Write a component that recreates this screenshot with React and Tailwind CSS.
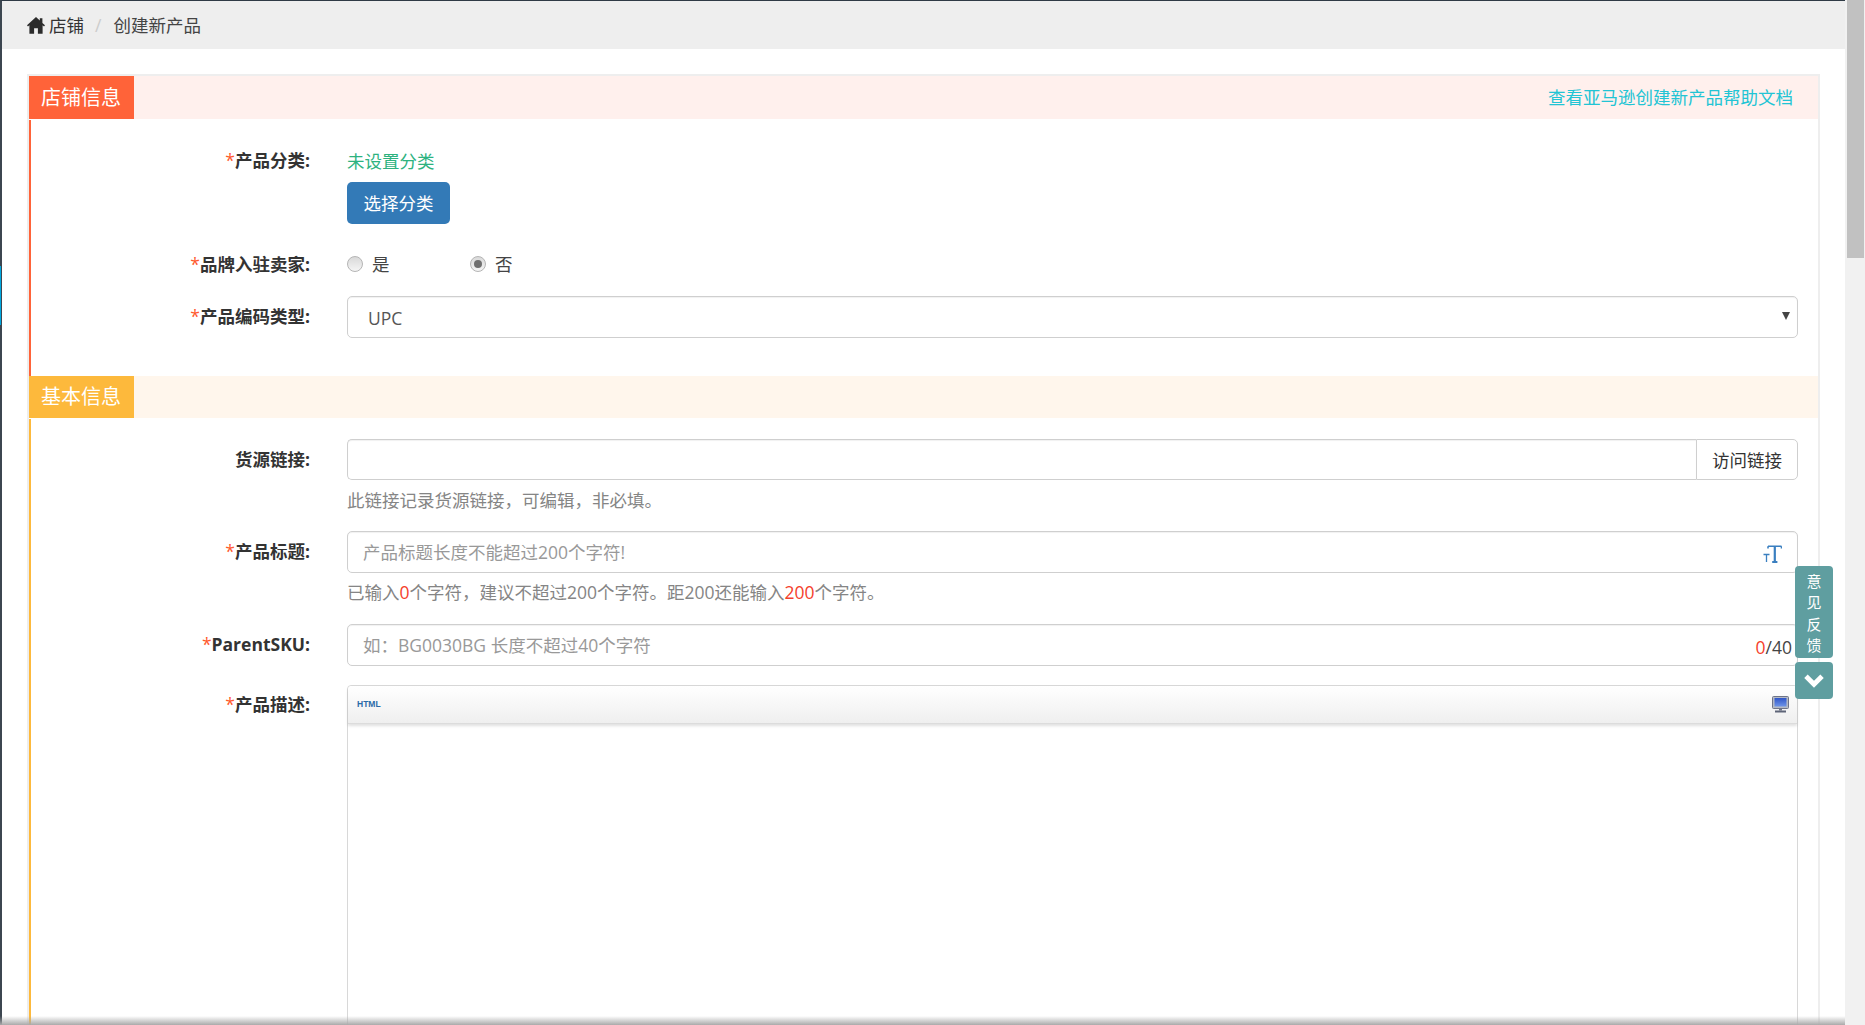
import React from "react";

const FONT = { fontFamily: '"Open Sans","Noto Sans CJK SC",sans-serif' };

function Label({ star = true, h = "h-[41px]", children }) {
  return (
    <div className={`w-[279px] shrink-0 flex items-center justify-end text-[17.5px] font-bold text-[#333] ${h}`}>
      {star && <span className="text-[#ff5a2d] font-normal">*</span>}
      {children}:
    </div>
  );
}

function Radio({ checked, label, className = "" }) {
  return (
    <div className={`flex items-center gap-[9px] ${className}`}>
      <span className="w-[16px] h-[16px] rounded-full border border-[#b5b5b5] bg-gradient-to-b from-[#d9d9d9] to-[#f5f5f5] flex items-center justify-center">
        {checked && <span className="w-[8px] h-[8px] rounded-full bg-[#707070]" />}
      </span>
      <span className="text-[17.5px] text-[#444]">{label}</span>
    </div>
  );
}

const inputCls =
  "w-full h-[42px] border border-[#cfcfcf] rounded-[5px] px-[15px] text-[17.5px] text-[#555] bg-white outline-none placeholder:text-[#999] shadow-[inset_0_1px_1px_rgba(0,0,0,0.06)]";

function HomeIcon() {
  return (
    <svg viewBox="0 0 18 17" className="w-[18px] h-[17px] fill-[#2b2b2b]">
      <path d="M9 0 L12.8 3.5 V1.2 H15.4 V5.9 L18 8.3 L17 9.5 L15.6 8.3 V16.8 H10.9 V11.2 H7.1 V16.8 H2.4 V8.3 L1 9.5 L0 8.3 Z" />
    </svg>
  );
}

function TextSizeIcon() {
  return (
    <svg viewBox="0 0 19 18" className="w-[19px] h-[18px] stroke-[#3a7fc0] fill-none">
      <path d="M5 1.2 H18.5 M5 1.2 V3.5 M18.5 1.2 V3.5" strokeWidth="1.6" />
      <path d="M11.8 1.2 V17 M9.2 17 H14.4" strokeWidth="2.2" />
      <path d="M0.5 9.5 H6.5 M3.5 9.5 V17" strokeWidth="1.3" />
    </svg>
  );
}

function MonitorIcon() {
  return (
    <svg viewBox="0 0 17 17" className="w-[17px] h-[17px]">
      <defs>
        <linearGradient id="scr" x1="0" y1="0" x2="0" y2="1">
          <stop offset="0" stopColor="#2f55c8" />
          <stop offset="1" stopColor="#6f95e8" />
        </linearGradient>
      </defs>
      <rect x="0.5" y="0.5" width="16" height="12" rx="1" fill="#b5bac4" stroke="#6e7488" />
      <rect x="2.5" y="2" width="12" height="8.5" fill="url(#scr)" />
      <rect x="7" y="12.5" width="3" height="2" fill="#6e7488" />
      <rect x="3" y="14.5" width="11" height="2" fill="#5e6578" />
    </svg>
  );
}

function SectionHeader({ title, block, bg, h = "h-[43px]", children }) {
  return (
    <div className={`flex items-stretch justify-between ${h} ${bg}`}>
      <div className={`w-[105px] -ml-[0.5px] flex items-center justify-center text-[20px] text-white ${block}`}>{title}</div>
      {children}
    </div>
  );
}

export default function App() {
  return (
    <div className="relative w-full h-screen overflow-hidden flex bg-white" style={FONT}>
      <main className="flex-1 min-w-0 h-full overflow-hidden border-l-2 border-t border-l-[#3c4650] border-t-[#2f3a45]">
        <nav className="h-[48px] bg-[#eeeeee] flex items-center pl-[25px] text-[17.5px] text-[#444]">
          <HomeIcon />
          <span className="ml-[4px] text-[#333]">店铺</span>
          <span className="ml-[11px] text-[#ccc]">/</span>
          <span className="ml-[12px]">创建新产品</span>
        </nav>

        <div className="mx-[25px] mt-[25px] border-x-2 border-t-2 border-[#eeeeee]">
          <SectionHeader title="店铺信息" block="bg-[#ff6339]" bg="bg-[#fff0ed]">
            <a className="self-center pr-[25px] text-[17.5px] text-[#22c4d4]">查看亚马逊创建新产品帮助文档</a>
          </SectionHeader>

          <div className="mt-[1px] border-l-2 border-[#ff6339] pt-[21px] pb-[38px] pr-[20px]">
            <div className="flex gap-[37px]">
              <Label h="h-[39px]">产品分类</Label>
              <div className="flex-1">
                <div className="h-[41px] flex items-center text-[17.5px] text-[#2db27f]">未设置分类</div>
                <button className="w-[103px] h-[42px] rounded-[5px] bg-[#337ab7] text-white text-[17.5px]">选择分类</button>
              </div>
            </div>
            <div className="mt-[25px] h-[30px] flex items-center gap-[37px]">
              <Label>品牌入驻卖家</Label>
              <div className="flex">
                <Radio label="是" className="w-[123px]" />
                <Radio checked label="否" />
              </div>
            </div>
            <div className="mt-[17px] flex items-start gap-[37px]">
              <Label>产品编码类型</Label>
              <div className="relative flex-1">
                <select className={`${inputCls} appearance-none !pl-[20px] !pt-[2px]`} defaultValue="UPC">
                  <option>UPC</option>
                  <option>EAN</option>
                </select>
                <svg viewBox="0 0 8 8" className="absolute right-[8px] top-[16px] w-[8px] h-[8px] fill-[#444]">
                  <path d="M0 0 H8 L4 8 Z" />
                </svg>
              </div>
            </div>
          </div>

          <SectionHeader title="基本信息" h="h-[42px]" block="bg-[#fdb93c]" bg="bg-[#fff6ec]" />

          <div className="mt-[1px] border-l-2 border-[#fdb93c] pt-[20px] pr-[20px] h-[800px]">
            <div className="flex gap-[37px]">
              <Label star={false}>货源链接</Label>
              <div className="flex-1 flex h-[41px]">
                <input className={`${inputCls} !h-[41px] rounded-r-none border-r-0 flex-1`} />
                <button className="w-[102px] shrink-0 border border-[#cfcfcf] rounded-r-[5px] bg-white text-[17.5px] text-[#333] pt-[2px]">访问链接</button>
              </div>
            </div>
            <div className="ml-[316px] mt-[7px] h-[26px] flex items-center text-[17.5px] text-[#858585]">此链接记录货源链接，可编辑，非必填。</div>

            <div className="mt-[18px] flex gap-[37px]">
              <Label>产品标题</Label>
              <div className="relative flex-1">
                <input className={inputCls} placeholder="产品标题长度不能超过200个字符!" />
                <div className="absolute right-[16px] top-[14px]">
                  <TextSizeIcon />
                </div>
              </div>
            </div>
            <div className="ml-[316px] mt-[6px] h-[26px] flex items-center text-[17.5px] text-[#858585] whitespace-pre">
              已输入<span className="text-[#f5402c]">0</span>个字符，建议不超过200个字符。距200还能输入<span className="text-[#f5402c]">200</span>个字符。
            </div>

            <div className="mt-[19px] flex gap-[37px]">
              <Label>ParentSKU</Label>
              <div className="relative flex-1">
                <input className={inputCls} placeholder="如：BG0030BG 长度不超过40个字符" />
                <span className="absolute right-[6px] top-[9px] text-[17.5px] leading-[28px] text-[#444]">
                  <span className="text-[#f5402c]">0</span>/40
                </span>
              </div>
            </div>

            <div className="mt-[19px] flex gap-[37px]">
              <Label h="h-[39px]">产品描述</Label>
              <div className="flex-1 h-[600px] border border-[#d8d8d8] rounded-t-[4px]">
                <div className="h-[38px] flex items-center justify-between pl-[9px] pr-[8px] bg-gradient-to-b from-white to-[#efefef] border-b border-[#dcdcdc] shadow-[0_2px_3px_rgba(0,0,0,0.12)] rounded-t-[4px]">
                  <span className="text-[8.5px] font-bold text-[#2a6aa8]" style={{ fontFamily: '"Liberation Sans",sans-serif' }}>HTML</span>
                  <MonitorIcon />
                </div>
              </div>
            </div>
          </div>
        </div>
      </main>

      <div className="w-[20px] shrink-0 h-full bg-[#f1f1f1] pl-[2px] pr-[1px]">
        <div className="h-[258px] bg-[#c1c1c1]" />
      </div>

      <div className="absolute left-0 top-[266px] w-[1px] h-[59px] bg-[#00a8e0]" />

      <div className="absolute left-[1795px] top-[566px] w-[38px] flex flex-col gap-[4px]">
        <div className="h-[92px] rounded-[4px] pt-[3px] bg-[#5f9ea0] text-white text-[15px] leading-[21.4px] flex flex-col items-center justify-center">
          <span>意</span>
          <span>见</span>
          <span>反</span>
          <span>馈</span>
        </div>
        <div className="h-[37px] rounded-[4px] bg-[#5f9ea0] flex items-center justify-center">
          <svg viewBox="0 0 20 14" className="w-[22px] h-[15px] fill-none stroke-white">
            <path d="M2.5 3 L10 10.5 L17.5 3" strokeWidth="4.5" />
          </svg>
        </div>
      </div>

      <div className="absolute left-0 bottom-0 w-[1845px] h-[9px] bg-gradient-to-b from-transparent to-[#aaaaaa]" />
    </div>
  );
}
